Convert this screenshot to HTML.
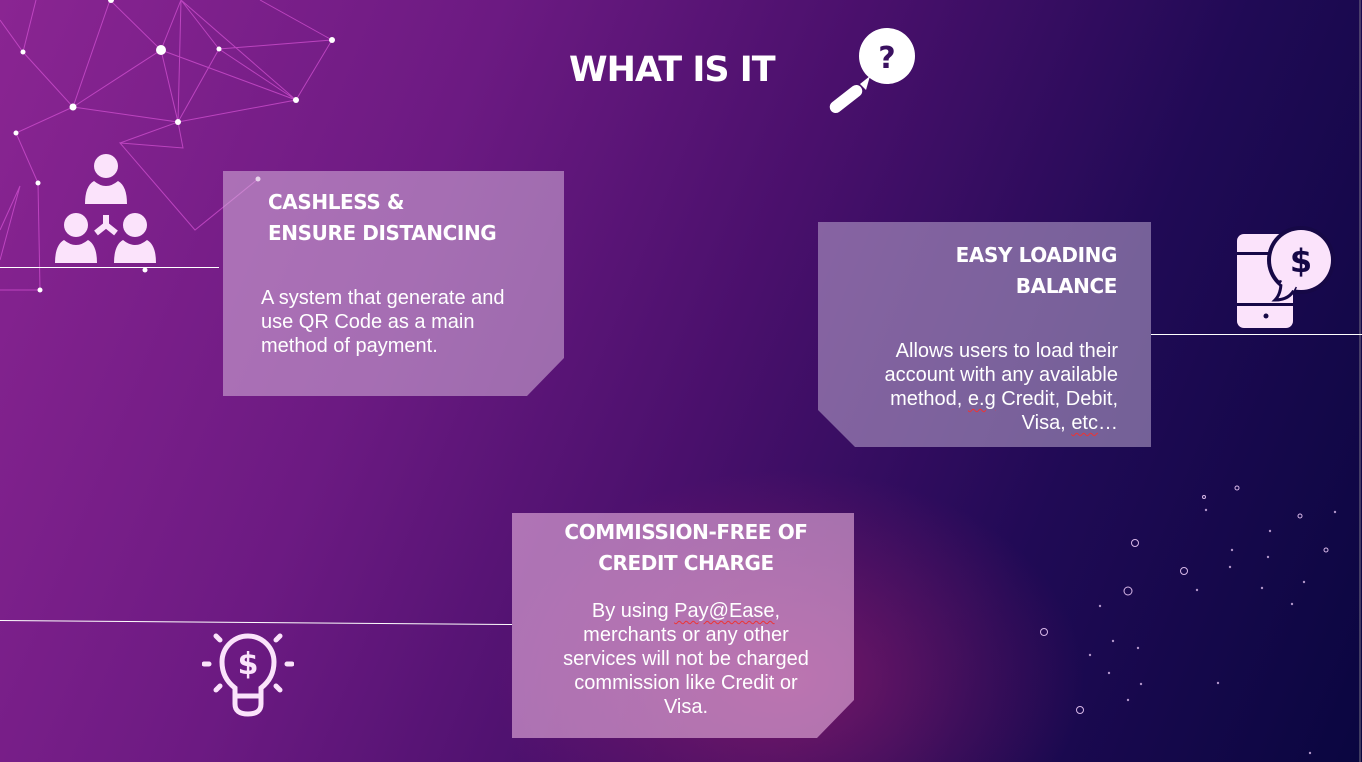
<!DOCTYPE html>
<html><head><meta charset="utf-8"><style>
html,body{margin:0;padding:0}
body{width:1362px;height:762px;overflow:hidden;position:relative;font-family:"Liberation Sans",sans-serif;
background:
radial-gradient(ellipse 420px 300px at 790px 680px, rgba(160,30,110,0.6), rgba(160,30,110,0) 70%),
linear-gradient(112deg,#8a2592 0%,#6c1a82 30%,#4a106c 52%,#200a55 75%,#0a0640 100%);}
.box{position:absolute;background:rgba(225,190,225,0.5);color:#fff}
.h{font-family:"DejaVu Sans","Liberation Sans",sans-serif;font-weight:bold;font-size:20px;line-height:31px;position:absolute;letter-spacing:-0.4px}
.p{font-size:20px;line-height:24px;position:absolute}
.sq{text-decoration:underline wavy #e33;text-decoration-thickness:1px;text-underline-offset:3px}
.ln{position:absolute;height:1px;background:#fff}
</style></head><body>
<svg width="1362" height="762" style="position:absolute;left:0;top:0">
<g stroke="#d050d0" stroke-width="1" opacity="0.75" fill="none">
<path d="M0,20 L23,52 L73,107 L161,50 L110,0 M23,52 L36,0 M73,107 L110,0 M73,107 L178,122 L181,0 L161,50 L178,122 L219,49 L332,40 L296,100 L178,122 M161,50 L296,100 M181,0 L296,100 M219,49 L181,0 M332,40 L260,0 M296,100 L219,49 M16,133 L73,107 M16,133 L38,183 L40,290 M120,143 L178,122 L183,148 L120,143 L195,230 L258,179 M0,230 L20,186 L0,260 M0,290 L40,290"/>
</g>
<g fill="#fff">
<circle cx="161" cy="50" r="5"/><circle cx="23" cy="52" r="2.5"/><circle cx="73" cy="107" r="3.5"/><circle cx="178" cy="122" r="3"/><circle cx="219" cy="49" r="2.5"/><circle cx="332" cy="40" r="3"/><circle cx="296" cy="100" r="3"/><circle cx="16" cy="133" r="2.5"/><circle cx="38" cy="183" r="2.5"/><circle cx="258" cy="179" r="2.5"/><circle cx="145" cy="270" r="2.5"/><circle cx="40" cy="290" r="2.5"/><circle cx="111" cy="0" r="3"/>
</g>
<g fill="#d8b8e8" opacity="0.8">
<circle cx="1206" cy="510" r="1.2"/><circle cx="1270" cy="531" r="1.2"/><circle cx="1335" cy="512" r="1.2"/><circle cx="1232" cy="550" r="1.2"/><circle cx="1268" cy="557" r="1.2"/><circle cx="1230" cy="567" r="1.2"/><circle cx="1304" cy="582" r="1.2"/><circle cx="1197" cy="590" r="1.2"/><circle cx="1262" cy="588" r="1.2"/><circle cx="1292" cy="604" r="1.2"/><circle cx="1100" cy="606" r="1.2"/><circle cx="1113" cy="641" r="1.2"/><circle cx="1138" cy="648" r="1.2"/><circle cx="1090" cy="655" r="1.2"/><circle cx="1109" cy="673" r="1.2"/><circle cx="1218" cy="683" r="1.2"/><circle cx="1141" cy="684" r="1.2"/><circle cx="1128" cy="700" r="1.2"/><circle cx="1310" cy="753" r="1.2"/>
</g>
<g fill="none" stroke="#d8b8e8" stroke-width="1">
<circle cx="1204" cy="497" r="1.5"/><circle cx="1237" cy="488" r="2"/><circle cx="1300" cy="516" r="2"/><circle cx="1326" cy="550" r="2"/><circle cx="1135" cy="543" r="3.5"/><circle cx="1184" cy="571" r="3.5"/><circle cx="1128" cy="591" r="4"/><circle cx="1044" cy="632" r="3.5"/><circle cx="1080" cy="710" r="3.5"/>
</g>
<line x1="1360" y1="0" x2="1360" y2="762" stroke="#bba" stroke-width="1" opacity="0.6"/>
</svg>
<div class="ln" style="left:0;top:267px;width:219px"></div>
<div class="ln" style="left:1151px;top:334px;width:211px"></div>
<div class="ln" style="left:0;top:620px;width:512px;transform:rotate(0.45deg);transform-origin:left"></div>

<div style="position:absolute;left:569px;top:50px;color:#fff;font-family:'DejaVu Sans','Liberation Sans',sans-serif;font-weight:bold;font-size:35px;letter-spacing:-1px">WHAT IS IT</div>

<svg style="position:absolute;left:826px;top:28px" width="92" height="86" viewBox="0 0 92 86">
<circle cx="61" cy="28" r="28" fill="#fff"/>
<path d="M44,48 L34,56 L40,62 Z" fill="#fff"/>
<rect x="1" y="65" width="38" height="12" rx="6" fill="#fff" transform="rotate(-38 20 71)"/>
<text x="61" y="40" text-anchor="middle" fill="#3a1060" font-family="DejaVu Sans" font-weight="bold" font-size="30">?</text>
</svg>

<svg style="position:absolute;left:54px;top:153px" width="104" height="112" viewBox="0 0 104 112" fill="#fbe3fb">
<circle cx="52" cy="13" r="12"/><path d="M31,51 Q31,33 40,28 Q52,38 64,28 Q73,33 73,51 Z"/>
<circle cx="22" cy="72" r="12"/><path d="M1,110 Q1,92 10,87 Q22,97 34,87 Q43,92 43,110 Z"/>
<circle cx="81" cy="72" r="12"/><path d="M60,110 Q60,92 69,87 Q81,97 93,87 Q102,92 102,110 Z"/>
<path d="M52,62 L52,72 M52,72 L42,80 M52,72 L62,80" stroke="#fbe3fb" stroke-width="6" fill="none"/>
</svg>

<svg style="position:absolute;left:1235px;top:226px" width="100" height="104" viewBox="0 0 100 104">
<rect x="2" y="8" width="56" height="94" rx="7" fill="#fbe3fb"/>
<rect x="2" y="26" width="56" height="3" fill="#160846"/>
<rect x="2" y="77" width="56" height="3" fill="#160846"/>
<circle cx="31" cy="90" r="2.5" fill="#160846"/>
<circle cx="66" cy="34" r="34" fill="#160846"/>
<circle cx="66" cy="34" r="30" fill="#fbe3fb"/>
<path d="M46,56 Q46,68 40,74 Q55,74 60,62 Z" fill="#fbe3fb" stroke="#160846" stroke-width="3"/>
<path d="M47,55 L60,62" stroke="#fbe3fb" stroke-width="6"/>
<text x="66" y="46" text-anchor="middle" fill="#160846" font-family="DejaVu Sans" font-weight="bold" font-size="32">$</text>
</svg>

<svg style="position:absolute;left:202px;top:626px" width="92" height="92" viewBox="0 0 92 92" fill="none" stroke="#fbe3fb" stroke-width="5" stroke-linecap="round">
<path d="M33,62 Q20,52 20,36 A26,26 0 0 1 72,36 Q72,52 59,62 L59,78 Q59,88 46,88 Q33,88 33,78 Z"/>
<line x1="33" y1="70" x2="59" y2="70"/>
<line x1="2" y1="38" x2="7" y2="38"/><line x1="85" y1="38" x2="90" y2="38"/>
<line x1="14" y1="10" x2="18" y2="14"/><line x1="78" y1="10" x2="74" y2="14"/>
<line x1="14" y1="64" x2="18" y2="60"/><line x1="78" y1="64" x2="74" y2="60"/>
<text x="46" y="48" text-anchor="middle" fill="#fbe3fb" stroke="none" font-family="DejaVu Sans" font-weight="bold" font-size="30">$</text>
</svg>

<div class="box" style="left:223px;top:171px;width:341px;height:225px;background:rgba(215,180,220,0.55);clip-path:polygon(0 0,100% 0,100% 187px,304px 100%,0 100%)">
<div class="h" style="left:45px;top:16px">CASHLESS &amp;<br>ENSURE DISTANCING</div>
<div class="p" style="left:38px;top:115px">A system that generate and<br>use QR Code as a main<br>method of payment.</div>
</div>

<div class="box" style="left:818px;top:222px;width:333px;height:225px;background:rgba(190,170,210,0.55);clip-path:polygon(0 0,100% 0,100% 100%,37px 100%,0 188px)">
<div class="h" style="right:34px;top:18px;text-align:right">EASY LOADING<br>BALANCE</div>
<div class="p" style="right:33px;top:117px;text-align:right">Allows users to load their<br>account with any available<br>method, <span class="sq">e.g</span> Credit, Debit,<br>Visa, <span class="sq">etc</span>…</div>
</div>

<div class="box" style="left:512px;top:513px;width:342px;height:225px;background:rgba(235,180,225,0.6);clip-path:polygon(0 0,100% 0,100% 187px,305px 100%,0 100%)">
<div class="h" style="left:0;width:348px;text-align:center;top:4px">COMMISSION-FREE OF<br>CREDIT CHARGE</div>
<div class="p" style="left:0;width:348px;text-align:center;top:86px">By using <span class="sq">Pay@Ease</span>,<br>merchants or any other<br>services will not be charged<br>commission like Credit or<br>Visa.</div>
</div>
</body></html>
